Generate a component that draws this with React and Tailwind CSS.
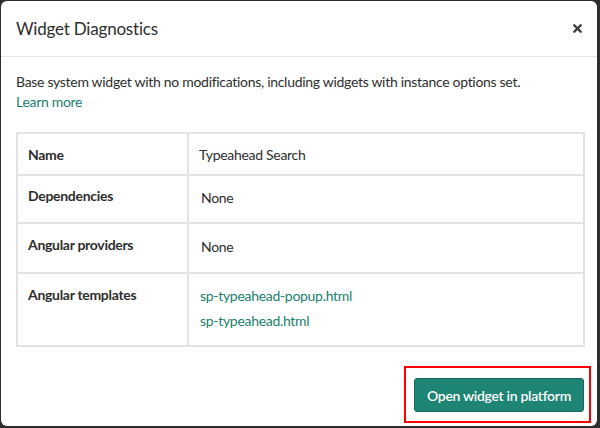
import { X } from "lucide-react";

const rows = [
  { label: "Name", values: ["Typeahead Search"], h: "h-[42px]", lt: "pt-[11px]", vt: "pt-[11px]", vl: "pl-[10px]" },
  { label: "Dependencies", values: ["None"], h: "h-[48px]", lt: "pt-[10px]", vt: "pt-[12px]", vl: "pl-[12px]" },
  { label: "Angular providers", values: ["None"], h: "h-[50px]", lt: "pt-[11px]", vt: "pt-[13px]", vl: "pl-[12px]" },
  {
    label: "Angular templates",
    values: ["sp-typeahead-popup.html", "sp-typeahead.html"],
    links: true,
    h: "h-[71px]",
    lt: "pt-[11px]",
    vt: "pt-[12px]",
    vl: "pl-[11px]",
  },
];

export default function App() {
  return (
    <div className="w-[600px] h-[428px] bg-[#2c2f2d] pt-[1px] pl-[1px] font-['Lato','Liberation_Sans',sans-serif] text-[#2e2e2e]">
      <div className="w-[596px] h-[425px] bg-white rounded-[6px] flex flex-col">
        <div className="h-[56px] flex items-center justify-between pl-[15px] pr-[13px] border-b border-[#e4e4e4]">
          <h1 className="text-[17px] leading-6 mt-[1px] tracking-[-0.2px]">Widget Diagnostics</h1>
          <X className="w-[13px] h-[13px] text-[#3c3c3c]" strokeWidth={4.5} />
        </div>

        <div className="pl-[15px] pr-[12px] pt-[15px] tracking-[-0.3px]">
          <p className="text-[14px] leading-5">
            Base system widget with no modifications, including widgets with instance options set.
          </p>
          <a className="block text-[14px] leading-5 text-[#1b7f6e]">Learn more</a>

          <div className="mt-[20px] border-2 border-[#e3e3e3] text-[14px] leading-5">
            {rows.map((r, i) => (
              <div
                key={r.label}
                className={`grid grid-cols-[171px_1fr] ${r.h} ${i < rows.length - 1 ? "border-b-2 border-[#e3e3e3]" : ""}`}
              >
                <div className={`border-r-2 border-[#e3e3e3] pl-[10px] font-bold ${r.lt}`}>{r.label}</div>
                <div className={`${r.vl} ${r.vt} flex flex-col gap-[5px]`}>
                  {r.values.map((v) => (
                    <span key={v} className={r.links ? "text-[#1b7f6e]" : ""}>
                      {v}
                    </span>
                  ))}
                </div>
              </div>
            ))}
          </div>
        </div>

        <div className="flex justify-end pr-[13px] pt-[31px]">
          <div className="relative">
            <button className="h-[34px] px-[12px] rounded-[3px] bg-[#1e8474] border border-[#16695c] text-white text-[14px] font-semibold tracking-[-0.3px]">
              Open widget in platform
            </button>
            <div className="absolute -left-[10px] -top-[12px] -right-[7px] -bottom-[11px] border-2 border-[#ff0000] pointer-events-none" />
          </div>
        </div>
      </div>
    </div>
  );
}
